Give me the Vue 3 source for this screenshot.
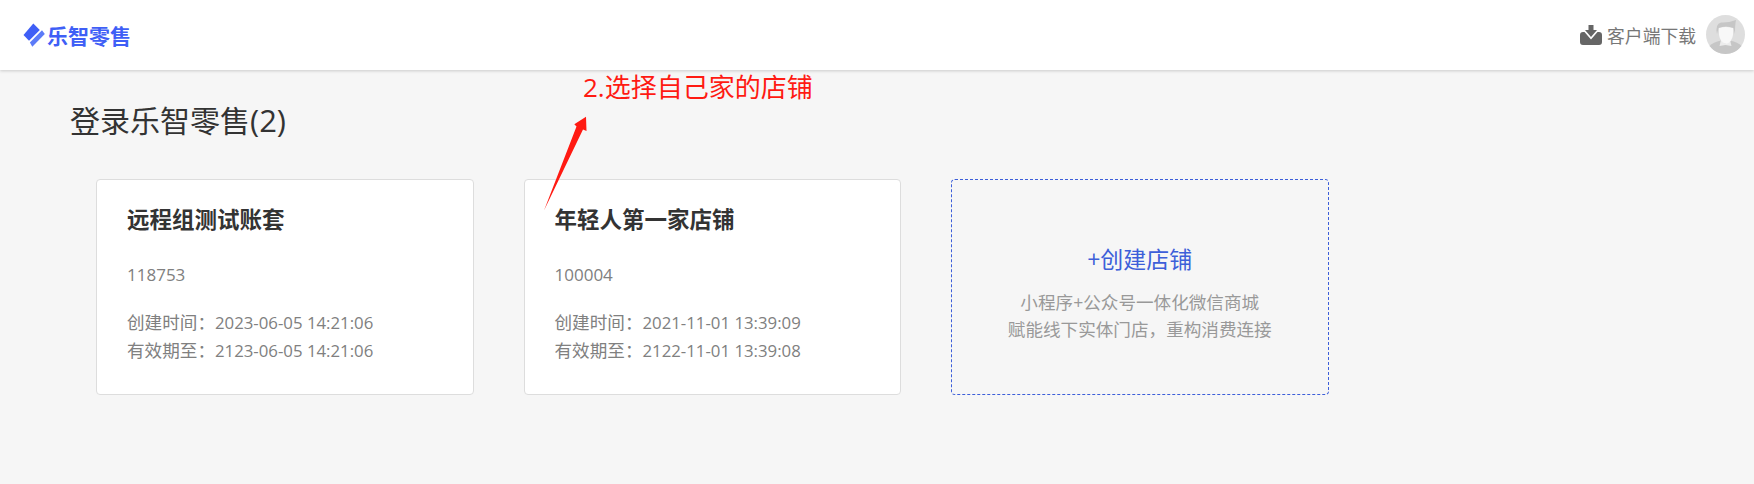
<script setup>
const shops = [
  { name: '远程组测试账套', id: '118753', created: '2023-06-05 14:21:06', expires: '2123-06-05 14:21:06' },
  { name: '年轻人第一家店铺', id: '100004', created: '2021-11-01 13:39:09', expires: '2122-11-01 13:39:08' },
]
</script>

<template>
  <div class="page">
    <header class="topbar">
      <div class="brand">
        <svg class="logo" viewBox="0 0 22 24" width="22" height="24">
          <path d="M10.3 .5 L16.8 7 L6 17.8 L.5 12 Z" fill="#3f5ff6" />
          <path d="M19 7.3 L21.8 11 L9.3 23.7 L6.9 19.4 Z" fill="#5c7bf8" />
        </svg>
        <span>乐智零售</span>
      </div>
      <div class="actions">
        <svg class="dl" viewBox="0 0 22 20" width="22" height="20">
          <path d="M8.5 0 H13.5 V5 H17 L11 12 L5 5 H8.5 Z" fill="#666" />
          <path d="M3 7 H4.5 L11 14.5 L17.5 7 H19 Q22 7 22 10 V17 Q22 20 19 20 H3 Q0 20 0 17 V10 Q0 7 3 7 Z" fill="#666" />
        </svg>
        <span class="dl-text">客户端下载</span>
        <svg class="avatar" viewBox="0 0 39 39" width="39" height="39">
          <circle cx="19.5" cy="19.5" r="19.5" fill="#dedede" />
          <path d="M3.5 31 Q7 27 15 25.5 L24 25.5 Q32 27 35.5 31 Q29 39 19.5 39 Q10 39 3.5 31 Z" fill="#c6c6c6" />
          <path d="M15 25 L19.5 29 L24 25 L25.5 31 L19.5 30 L13.5 31 Z" fill="#ececec" />
          <path d="M13 13 Q19 11 27 13 L27 20 Q26 27 20 29 Q14 27 13 20 Z" fill="#f8f8f8" />
          <path d="M11 19 Q9 9 15 7.5 Q22 8 30 5 Q29 9 29 19 L27.5 13 Q20 10 12.5 13 Z" fill="#c6c6c6" />
        </svg>
      </div>
    </header>

    <main class="content">
      <h1 class="heading">登录乐智零售<span class="count">(2)</span></h1>
      <div class="cards">
        <article v-for="shop in shops" :key="shop.id" class="card">
          <h2 class="name">{{ shop.name }}</h2>
          <p class="code">{{ shop.id }}</p>
          <p class="date">创建时间：<span class="stamp">{{ shop.created }}</span></p>
          <p class="date">有效期至：<span class="stamp">{{ shop.expires }}</span></p>
        </article>
        <article class="card create">
          <div class="create-title">+创建店铺</div>
          <p class="create-desc">小程序+公众号一体化微信商城</p>
          <p class="create-desc">赋能线下实体门店，重构消费连接</p>
        </article>
      </div>
    </main>

    <div class="note">2.选择自己家的店铺</div>
    <svg class="arrow" viewBox="0 0 50 100" width="50" height="100">
      <path d="M1 96.5 L33.5 12.5 L31.3 10.3 L43 2.7 L43.5 17 L40 15.5 Z" fill="#ff1a12" />
    </svg>
  </div>
</template>

<style>
html, body { margin: 0; background: #f6f6f6; }
</style>

<style scoped>
.page {
  position: relative;
  height: 484px;
  overflow: hidden;
  background: #f6f6f6;
  font-family: "Open Sans", "Noto Sans CJK SC", sans-serif;
  color: #333;
}
.topbar {
  box-sizing: border-box;
  height: 70px;
  background: #fff;
  box-shadow: 0 1px 3px rgba(0, 0, 0, .18);
  display: flex;
  align-items: center;
  justify-content: space-between;
  padding: 0 9px 1px 23px;
}
.brand {
  display: flex;
  align-items: center;
  gap: 2px;
  color: #3f5ff6;
  font-size: 21px;
  font-weight: 700;
}
.logo { display: block; }
.actions {
  display: flex;
  align-items: center;
  color: #777;
  font-size: 17.8px;
}
.dl { display: block; }
.dl-text { margin: 0 10px 0 5px; }
.avatar { display: block; }
.content { padding: 31px 0 0 70px; }
.heading {
  margin: 0;
  height: 40px;
  font-size: 30px;
  line-height: 40px;
  font-weight: 400;
  color: #333;
}
.count {
  font-size: 31px;
  line-height: 1;
  font-weight: 500;
}
.cards {
  display: flex;
  gap: 50px;
  margin: 38px 0 0 26px;
}
.card {
  box-sizing: border-box;
  width: 377.5px;
  height: 216px;
  background: #fff;
  border: 1px solid #ddd;
  border-radius: 4px;
  padding: 25px 30px;
}
.name {
  margin: 0;
  font-size: 22.5px;
  line-height: 30px;
  font-weight: 700;
  color: #333;
}
.code {
  margin: 26px 0 21px;
  font-size: 17px;
  line-height: 27px;
  color: #808080;
}
.date {
  margin: 0;
  font-size: 17.6px;
  line-height: 27.5px;
  color: #808080;
}
.stamp { font-size: 16.8px; }
.create {
  background: transparent;
  border: 1px dashed #3d5fd9;
  text-align: center;
  padding-top: 64px;
}
.create-title {
  font-size: 23px;
  line-height: 30px;
  color: #3d5fd9;
  margin-bottom: 15px;
}
.create-desc {
  margin: 0;
  font-size: 17.6px;
  line-height: 27px;
  color: #999;
}
.note {
  position: absolute;
  left: 583px;
  top: 70px;
  font-size: 26px;
  line-height: 34px;
  color: #ff1a12;
}
.arrow {
  position: absolute;
  left: 543px;
  top: 114px;
}
</style>
